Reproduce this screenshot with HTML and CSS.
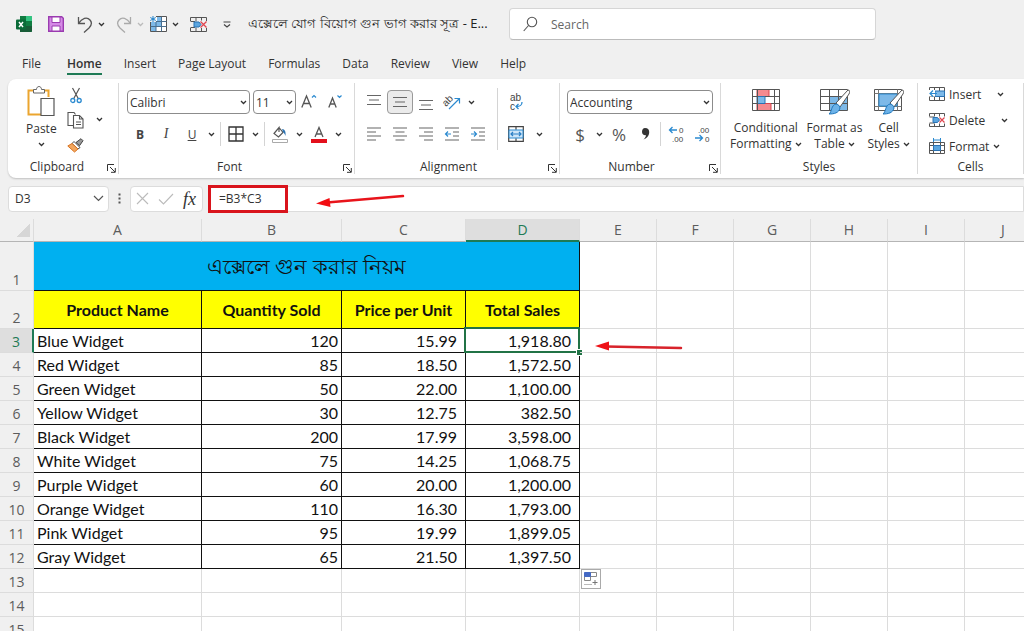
FILE: index.html
```html
<!DOCTYPE html>
<html lang="bn">
<head>
    <meta charset="UTF-8">
    <title>এক্সেলে যোগ বিয়োগ গুন ভাগ করার সূত্র - Excel</title>
    <meta name="viewport" content="width=device-width, initial-scale=1.0">
    <link rel="stylesheet" href="styles.css">
</head>
<body>
    <!-- Shared icons -->
    <svg class="sprite" aria-hidden="true">
        <symbol id="chevron" viewBox="0 0 7 5"><path d="M1 1l2.5 2.5L6 1" fill="none" stroke="currentColor" stroke-width="1.3"/></symbol>
        <symbol id="launcher" viewBox="0 0 9 9"><path d="M.5 7V.5H7M3 3l5 5M8.300 4v4.300H4" fill="none" stroke="currentColor"/></symbol>
        <symbol id="brush" viewBox="0 0 22 28"><path d="M20 1c2 0 2 2 1 4L12 18l-4-4z" fill="#fff" stroke="#555"/><path d="M8 15c2 0 4 2 4 4-1 5-6 6-11 6 3-2 2-9 7-10z" fill="#6cb2e8" stroke="#1f77bd"/></symbol>
    </svg>

    <header class="titlebar">
        <svg class="app-logo" width="16" height="16" viewBox="0 0 16 16">
            <path d="M4 0h11a1 1 0 011 1v14a1 1 0 01-1 1H4z" fill="#21a366"/>
            <path d="M4 0h6v5H4z" fill="#107c41"/><path d="M10 0h5a1 1 0 011 1v4h-6z" fill="#33c481"/>
            <path d="M4 10h12v5a1 1 0 01-1 1H4z" fill="#185c37"/><path d="M10 5h6v5h-6z" fill="#107c41"/>
            <rect y="3.500" width="10" height="10" rx="1" fill="#0b6b38"/>
            <path d="M3 6l4 5M7 6l-4 5" stroke="#fff" stroke-width="1.500"/>
        </svg>
        <button class="quick save" aria-label="Save">
            <svg width="16" height="16" viewBox="0 0 16 16"><path d="M.7.7h13l1.600 1.600v13H.7z" fill="#d58be6" stroke="#9a3bb0" stroke-width="1.400"/><path d="M4 1h8v5.500H4zM4 10h8v5H4z" fill="#fff" stroke="#9a3bb0"/></svg>
        </button>
        <button class="quick" aria-label="Undo">
            <svg width="16" height="17" viewBox="0 0 16 17"><path d="M1.500 1v6.500H8M1.500 7.500C5 2 10 .5 13 4s1 6-1 8l-5 4.500" fill="none" stroke="#555" stroke-width="1.300"/></svg>
            <svg class="chev"><use href="#chevron"/></svg>
        </button>
        <button class="quick faded" aria-label="Redo">
            <svg width="16" height="17" viewBox="0 0 16 17"><path d="M14.500 1v6.500H8M14.500 7.500C11 2 6 .5 3 4s-1 6 1 8l5 4.500" fill="none" stroke="#aaa" stroke-width="1.300"/></svg>
            <svg class="chev"><use href="#chevron"/></svg>
        </button>
        <button class="quick insert-cells" aria-label="Insert cells">
            <svg width="17" height="16" viewBox="0 0 17 16"><path d="M6 .5h10.500v15H.5V6" fill="#fff" stroke="#555"/><path d="M7 1h4.500v5H7zM1 6h10.500v4.500H1zM1 10.500h5v4.500H1z" fill="#7db9e8"/><path d="M.5 5.500h16M.5 10.500h16M6 6v9.500M11.500 .5v15" stroke="#4a6f8f"/><path d="M0 0h6v6H0z" fill="#f0f0f0"/><path d="M3 0v6M.3 1.500l5.400 3M5.700 1.500l-5.400 3" stroke="#1f82cc"/></svg>
            <svg class="chev"><use href="#chevron"/></svg>
        </button>
        <button class="quick delete-cells" aria-label="Delete cells">
            <svg width="17" height="15" viewBox="0 0 17 15"><path d="M.5 4V.5h16V4M.5 11v3.500h16V11M.5 4.500H5M.5 10.500H5M6 .5v4M11.500.5v3M6 10.500v4M11.500 11v3.500" fill="none" stroke="#555"/><path d="M4 5h5l2 2.500-2 2.500H4z" fill="#5ba6e0" stroke="#2b73b3"/><path d="M10.500 4.500l6 6M16.500 4.500l-6 6" stroke="#e0454f" stroke-width="1.300"/></svg>
        </button>
        <button class="quick" aria-label="Customize Quick Access Toolbar">
            <svg width="8" height="7" viewBox="0 0 8 7"><path d="M.5 1h7M1 3.500L4 6l3-2.500" fill="none" stroke="#444" stroke-width="1.200"/></svg>
        </button>
        <div class="doc-title">এক্সেলে যোগ বিয়োগ গুন ভাগ করার সূত্র - E...</div>
        <div class="search">
            <svg width="15" height="16" viewBox="0 0 15 16"><circle cx="9" cy="6" r="4.700" fill="none" stroke="#555" stroke-width="1.100"/><path d="M5.500 9.500L.7 15" stroke="#555" stroke-width="1.100"/></svg>
            <input type="search" placeholder="Search" aria-label="Search">
        </div>
    </header>

    <nav class="tabs">
        <a href="#file" class="file">File</a>
        <a href="#home" class="active">Home</a>
        <a href="#insert">Insert</a>
        <a href="#layout">Page Layout</a>
        <a href="#formulas">Formulas</a>
        <a href="#data">Data</a>
        <a href="#review">Review</a>
        <a href="#view">View</a>
        <a href="#help">Help</a>
    </nav>

    <div class="ribbon">
        <section class="group clipboard">
            <div class="group-body">
                <button class="big-btn">
                    <svg width="28" height="32" viewBox="0 0 28 32"><path d="M7 4.500H1.500v24H14M17 4.500h4.500V11" fill="none" stroke="#eba52f" stroke-width="2"/><path d="M6.500 7V3.500h3c0-4 5-4 5 0h3V7z" fill="#fff" stroke="#666"/><path d="M14 12.500h13v17H14z" fill="#fff" stroke="#555" stroke-width="1.200"/></svg>
                    <span>Paste</span>
                    <svg class="chev"><use href="#chevron"/></svg>
                </button>
                <div class="stack">
                    <button class="tool" aria-label="Cut"><svg width="12" height="17" viewBox="0 0 12 17"><path d="M2.500 1l6 11M9.500 1l-6 11" stroke="#555" stroke-width="1.200"/><circle cx="2.800" cy="13.500" r="2" fill="none" stroke="#2b8ad0" stroke-width="1.300"/><circle cx="9.200" cy="13.500" r="2" fill="none" stroke="#2b8ad0" stroke-width="1.300"/></svg></button>
                    <button class="tool" aria-label="Copy"><svg width="17" height="17" viewBox="0 0 17 17"><path d="M6 13.500H1V.5h6l1.500 2" fill="none" stroke="#555" stroke-width="1.100"/><path d="M6.500 3.500h6l3.500 3.500v9H6.500zM12.500 3.500V7H16M9 10h5M9 12.500h5" fill="#fff" stroke="#555" stroke-width="1.100"/></svg></button>
                    <button class="tool" aria-label="Format Painter"><svg width="17" height="15" viewBox="0 0 17 15"><path d="M9 4.500L14 .7l2 2-3.500 5z" fill="#999" stroke="#444"/><path d="M7 3.500l6 6-2 1.500-6-5.500z" fill="#fff" stroke="#444"/><path d="M5 5.500L.8 8l6.700 6 3.500-3z" fill="#f2a65e" stroke="#d9731f"/></svg></button>
                </div>
                <button class="drop" aria-label="Copy options"><svg class="chev"><use href="#chevron"/></svg></button>
            </div>
            <footer>Clipboard<button class="launcher" aria-label="Clipboard options"><svg><use href="#launcher"/></svg></button></footer>
        </section>

        <section class="group font">
            <div class="group-body rows">
                <div class="row">
                    <span class="select font-name"><select aria-label="Font"><option>Calibri</option></select><svg class="chev"><use href="#chevron"/></svg></span>
                    <span class="select font-size"><select aria-label="Font size"><option>11</option></select><svg class="chev"><use href="#chevron"/></svg></span>
                    <button class="tool" aria-label="Increase font size"><svg width="16" height="16" viewBox="0 0 16 16"><path d="M.8 13.500L5.500 2l4.700 11.500M2.500 9.500h6" fill="none" stroke="#555" stroke-width="1.300"/><path d="M11 3.500l2-2 2 2" fill="none" stroke="#2b8ad0" stroke-width="1.200"/></svg></button>
                    <button class="tool" aria-label="Decrease font size"><svg width="14" height="16" viewBox="0 0 14 16"><path d="M.8 13.500L4.500 4l3.700 9.500M2 10h5" fill="none" stroke="#555" stroke-width="1.300"/><path d="M9.500 1.500l2 2 2-2" fill="none" stroke="#2b8ad0" stroke-width="1.200"/></svg></button>
                </div>
                <div class="row">
                    <button class="tool letter"><b>B</b></button>
                    <button class="tool letter italic">I</button>
                    <button class="tool letter underline">U</button>
                    <button class="drop" aria-label="Underline options"><svg class="chev"><use href="#chevron"/></svg></button>
                    <span class="sep"></span>
                    <button class="tool" aria-label="Borders"><svg width="16" height="16" viewBox="0 0 16 16"><path d="M1 1h14v14H1zM8 1v14M1 8h14" fill="none" stroke="#333" stroke-width="1.300"/></svg></button>
                    <button class="drop" aria-label="Border options"><svg class="chev"><use href="#chevron"/></svg></button>
                    <span class="sep"></span>
                    <button class="tool" aria-label="Fill color"><svg width="16" height="17" viewBox="0 0 16 17"><path d="M7 1.500l4 5L6.500 11 2 7.500l5-6V6" fill="none" stroke="#555" stroke-width="1.200"/><path d="M10 3c3 0 4 3 3.500 7-.5-2-1.500-3-2.500-4z" fill="#2b73b3"/><path d="M.5 13.500h15v3H.5z" fill="#fff" stroke="#aaa"/></svg></button>
                    <button class="drop" aria-label="Fill options"><svg class="chev"><use href="#chevron"/></svg></button>
                    <button class="tool" aria-label="Font color"><svg width="16" height="17" viewBox="0 0 16 17"><path d="M4 11L8 1.500 12 11M5.500 8h5" fill="none" stroke="#555" stroke-width="1.300"/><path d="M0 13h16v4H0z" fill="#e3101c"/></svg></button>
                    <button class="drop" aria-label="Font color options"><svg class="chev"><use href="#chevron"/></svg></button>
                </div>
            </div>
            <footer>Font<button class="launcher" aria-label="Font options"><svg><use href="#launcher"/></svg></button></footer>
        </section>

        <section class="group alignment">
            <div class="group-body">
                <div class="rows">
                    <div class="row">
                        <button class="tool" aria-label="Top align"><svg class="lines" viewBox="0 0 16 16"><path d="M1 1.500h14M3 6h10M1 10.500h14"/></svg></button>
                        <button class="tool pressed" aria-label="Middle align"><svg class="lines" viewBox="0 0 16 16"><path d="M1 3.500h14M3 8h10M1 12.500h14"/></svg></button>
                        <button class="tool" aria-label="Bottom align"><svg class="lines" viewBox="0 0 16 16"><path d="M1 6.500h14M3 11h10M1 15.500h14"/></svg></button>
                        <button class="tool" aria-label="Orientation"><svg class="orient" width="18" height="18" viewBox="0 0 18 18"><text x="0" y="11" class="ab" transform="rotate(-45 5 9)">ab</text><path d="M6 16L16 6M11.500 5.500H16.500V10.500" fill="none" stroke="#2b8ad0" stroke-width="1.200"/></svg></button>
                        <button class="drop" aria-label="Orientation options"><svg class="chev"><use href="#chevron"/></svg></button>
                    </div>
                    <div class="row">
                        <button class="tool" aria-label="Align left"><svg class="lines" viewBox="0 0 16 16"><path d="M1 2h14M1 6h9M1 10h14M1 14h9"/></svg></button>
                        <button class="tool" aria-label="Center"><svg class="lines" viewBox="0 0 16 16"><path d="M1 2h14M3.500 6h9M1 10h14M3.500 14h9"/></svg></button>
                        <button class="tool" aria-label="Align right"><svg class="lines" viewBox="0 0 16 16"><path d="M1 2h14M6 6h9M1 10h14M6 14h9"/></svg></button>
                        <button class="tool" aria-label="Decrease indent"><svg class="lines" viewBox="0 0 16 16"><path d="M1 2h14M9 6h6M9 10h6M1 14h14"/><path d="M7 8H1.500M4 5.500L1.500 8 4 10.500" class="blue"/></svg></button>
                        <button class="tool" aria-label="Increase indent"><svg class="lines" viewBox="0 0 16 16"><path d="M1 2h14M9 6h6M9 10h6M1 14h14"/><path d="M1 8h5.500M4 5.500L6.500 8 4 10.500" class="blue"/></svg></button>
                    </div>
                </div>
                <span class="sep"></span>
                <div class="rows">
                    <div class="row">
                        <button class="tool" aria-label="Wrap text"><svg width="16" height="20" viewBox="0 0 16 20"><text x="2" y="9" class="ab">ab</text><text x="2" y="18" class="ab">c</text><path d="M14 10c0 3-1 4.500-6 4.500M10.500 12L8 14.500l2.500 2.500" fill="none" stroke="#2b8ad0" stroke-width="1.300"/></svg></button>
                    </div>
                    <div class="row">
                        <button class="tool" aria-label="Merge and center"><svg width="16" height="16" viewBox="0 0 16 16"><path d="M.7.7h14.600v14.600H.7zM8 .7v3M8 12.300v3" fill="#fff" stroke="#444" stroke-width="1.200"/><path d="M1 4h14v8H1z" fill="#cfe6f8" stroke="#2b8ad0"/><path d="M3 8h10M5 6L3 8l2 2M11 6l2 2-2 2" fill="none" stroke="#2b7fc4" stroke-width="1.200"/></svg></button>
                        <button class="drop wide" aria-label="Merge options"><svg class="chev"><use href="#chevron"/></svg></button>
                    </div>
                </div>
            </div>
            <footer>Alignment<button class="launcher" aria-label="Alignment options"><svg><use href="#launcher"/></svg></button></footer>
        </section>

        <section class="group number">
            <div class="group-body rows">
                <div class="row">
                    <span class="select number-format"><select aria-label="Number format"><option>Accounting</option></select><svg class="chev"><use href="#chevron"/></svg></span>
                </div>
                <div class="row">
                    <button class="tool symbol">$</button>
                    <button class="drop" aria-label="Currency options"><svg class="chev"><use href="#chevron"/></svg></button>
                    <button class="tool symbol">%</button>
                    <button class="tool" aria-label="Comma style"><svg width="9" height="12" viewBox="0 0 9 12"><path d="M4 0c3 0 4.500 2 4.200 4.500C8 8 5.500 10.500 2.500 11.500c1.500-1.500 2.500-3 2.500-4.300C2.500 7.500 1 6 1 3.700 1 1.500 2.300 0 4 0z" fill="#333"/></svg></button>
                    <span class="sep"></span>
                    <button class="tool" aria-label="Increase decimal"><svg width="17" height="18" viewBox="0 0 17 18"><text x="11" y="8" class="dec">0</text><text x="4" y="17" class="dec">.00</text><path d="M9 5H1.500M4.500 2L1.500 5l3 3" fill="none" stroke="#2b8ad0" stroke-width="1.300"/></svg></button>
                    <button class="tool" aria-label="Decrease decimal"><svg width="17" height="18" viewBox="0 0 17 18"><text x="4" y="8" class="dec">.00</text><text x="11" y="17" class="dec">0</text><path d="M1 13h7.500M5.500 10l3 3-3 3" fill="none" stroke="#2b8ad0" stroke-width="1.300"/></svg></button>
                </div>
            </div>
            <footer>Number<button class="launcher" aria-label="Number options"><svg><use href="#launcher"/></svg></button></footer>
        </section>

        <section class="group styles">
            <div class="group-body">
                <button class="big-btn">
                    <svg width="30" height="28" viewBox="0 0 30 28"><path d="M1.500 1.500h27v21h-27z" fill="#fff"/><path d="M6 1.500h12v7H6zM6 15.500h14v7H6z" fill="#f58a8f" stroke="#d9444c"/><path d="M6 8.500h8v7H6z" fill="#7db9e8" stroke="#2b73b3"/><path d="M1.500 1.500h27v21h-27zM1.500 8.500h4.500M14 8.500h14.500M1.500 15.500h4.500M20 15.500h8.500M6.500 1.500v21M23.500 1.500v21" fill="none" stroke="#555"/></svg>
                    <span>Conditional</span>
                    <span>Formatting <svg class="chev"><use href="#chevron"/></svg></span>
                </button>
                <button class="big-btn">
                    <svg width="31" height="28" viewBox="0 0 31 28"><path d="M1.500 1.500h27v21h-27z" fill="#fff"/><path d="M10.500 8.500h18v14h-18z" fill="#7db9e8"/><path d="M1.500 1.500h27v21h-27zM1.500 8.500h27M1.500 15.500h27M10.500 1.500v21M19.500 1.500v21" fill="none" stroke="#555"/><use href="#brush" x="9" y="1" width="22" height="28"/></svg>
                    <span>Format as</span>
                    <span>Table <svg class="chev"><use href="#chevron"/></svg></span>
                </button>
                <button class="big-btn">
                    <svg width="31" height="28" viewBox="0 0 31 28"><path d="M1.500 1.500h27v21h-27z" fill="#fff" stroke="#555"/><path d="M1.500 5.500h27M1.500 18.500h27M5.500 1.500v21M24.500 1.500v21" stroke="#777"/><path d="M6 6h18v12H6z" fill="#7db9e8" stroke="#2b8ad0"/><use href="#brush" x="9" y="1" width="22" height="28"/></svg>
                    <span>Cell</span>
                    <span>Styles <svg class="chev"><use href="#chevron"/></svg></span>
                </button>
            </div>
            <footer>Styles</footer>
        </section>

        <section class="group cells">
            <div class="group-body rows">
                <button class="line-btn"><svg width="16" height="14" viewBox="0 0 16 14"><path d="M.5.500h15v13H.5zM.5 9.500h15M5.500.5v13M10.500.5v13M10 4.500h5.500" fill="#fff" stroke="#555"/><path d="M6 4h9.500v5.500H6z" fill="#7db9e8" stroke="#2b73b3"/><path d="M0 3h6v6.500H0z" fill="#fff"/><path d="M8 6.500H1M4 3.500l-3 3 3 3" fill="none" stroke="#2b8ad0" stroke-width="1.200"/></svg><span>Insert</span><svg class="chev far"><use href="#chevron"/></svg></button>
                <button class="line-btn"><svg width="16" height="14" viewBox="0 0 16 14"><path d="M.5 3.500v-3h15v3M.5 10.500v3h15v-3M.5 4H5M.5 10H5M5.500.5v3M10.500.5v3M5.500 10.500v3M10.500 10.500v3" fill="none" stroke="#555"/><path d="M4 4.500h4.500l2 2.500-2 2.500H4z" fill="#5ba6e0" stroke="#2b73b3"/><path d="M10.500 4.500l5 5M15.500 4.500l-5 5" stroke="#e0454f" stroke-width="1.200"/></svg><span>Delete</span><svg class="chev far"><use href="#chevron"/></svg></button>
                <button class="line-btn"><svg width="16" height="16" viewBox="0 0 16 16"><path d="M.5 4.500h15v11H.5zM.5 7.500h15M.5 12.500h15M4.500 4.500v11M11.500 4.500v11" fill="#fff" stroke="#555"/><path d="M4.500 7.500h7v5h-7z" fill="#5ba6e0" stroke="#2b73b3"/><path d="M4.500 0v4M11.500 0v4M4.500 2h7" stroke="#2b8ad0"/></svg><span>Format</span><svg class="chev"><use href="#chevron"/></svg></button>
            </div>
            <footer>Cells</footer>
        </section>
    </div>

    <div class="formula-bar">
        <div class="name-box">
            <input type="text" value="D3" aria-label="Name box">
            <svg width="11" height="7" viewBox="0 0 11 7"><path d="M1 1l4.500 4.500L10 1" fill="none" stroke="#555" stroke-width="1.200"/></svg>
        </div>
        <svg class="dots" width="3" height="11" viewBox="0 0 3 11"><path d="M.5.500h2v2h-2zM.5 4.500h2v2h-2zM.5 8.500h2v2h-2z" fill="#555"/></svg>
        <div class="formula-actions">
            <button aria-label="Cancel"><svg width="13" height="13" viewBox="0 0 13 13"><path d="M1 1l11 11M12 1L1 12" stroke="#bbb" stroke-width="1.100"/></svg></button>
            <button aria-label="Enter"><svg width="16" height="12" viewBox="0 0 16 12"><path d="M1 6.500L5.500 11 15 1" fill="none" stroke="#bbb" stroke-width="1.100"/></svg></button>
            <button class="fx">fx</button>
        </div>
        <div class="formula">
            <input type="text" value="=B3*C3" aria-label="Formula">
            <span class="marker"></span>
            <svg class="arrow" width="90" height="14" viewBox="0 0 90 14"><path d="M88 2L12 8.500" stroke="#e8141b" stroke-width="2.500" stroke-linecap="round"/><path d="M1 9.500L14.500 4l1 9z" fill="#f20d12"/></svg>
        </div>
    </div>

    <main class="sheet">
        <table>
            <colgroup>
                <col class="col-head"><col class="col-a"><col class="col-b"><col class="col-c"><col class="col-d">
                <col class="col-x"><col class="col-x"><col class="col-x"><col class="col-x"><col class="col-x"><col class="col-x">
            </colgroup>
            <thead>
                <tr><th class="corner"></th><th>A</th><th>B</th><th>C</th><th class="current">D</th><th>E</th><th>F</th><th>G</th><th>H</th><th>I</th><th>J</th></tr>
            </thead>
            <tbody>
                <tr class="title-row"><th>1</th><td class="title" colspan="4">এক্সেলে গুন করার নিয়ম</td><td></td><td></td><td></td><td></td><td></td><td></td></tr>
                <tr class="label-row"><th>2</th><td class="label">Product Name</td><td class="label">Quantity Sold</td><td class="label">Price per Unit</td><td class="label">Total Sales</td><td></td><td></td><td></td><td></td><td></td><td></td></tr>
                <tr class="data"><th class="current">3</th><td>Blue Widget</td><td>120</td><td>15.99</td><td class="selected">1,918.80</td><td class="anchor"><svg class="arrow" width="90" height="12" viewBox="0 0 90 12"><path d="M87 8L12 6.500" stroke="#d8232b" stroke-width="2.500" stroke-linecap="round"/><path d="M1 6L15 1.500v9z" fill="#ee1218"/></svg></td><td></td><td></td><td></td><td></td><td></td></tr>
                <tr class="data"><th>4</th><td>Red Widget</td><td>85</td><td>18.50</td><td>1,572.50</td><td></td><td></td><td></td><td></td><td></td><td></td></tr>
                <tr class="data"><th>5</th><td>Green Widget</td><td>50</td><td>22.00</td><td>1,100.00</td><td></td><td></td><td></td><td></td><td></td><td></td></tr>
                <tr class="data"><th>6</th><td>Yellow Widget</td><td>30</td><td>12.75</td><td>382.50</td><td></td><td></td><td></td><td></td><td></td><td></td></tr>
                <tr class="data"><th>7</th><td>Black Widget</td><td>200</td><td>17.99</td><td>3,598.00</td><td></td><td></td><td></td><td></td><td></td><td></td></tr>
                <tr class="data"><th>8</th><td>White Widget</td><td>75</td><td>14.25</td><td>1,068.75</td><td></td><td></td><td></td><td></td><td></td><td></td></tr>
                <tr class="data"><th>9</th><td>Purple Widget</td><td>60</td><td>20.00</td><td>1,200.00</td><td></td><td></td><td></td><td></td><td></td><td></td></tr>
                <tr class="data"><th>10</th><td>Orange Widget</td><td>110</td><td>16.30</td><td>1,793.00</td><td></td><td></td><td></td><td></td><td></td><td></td></tr>
                <tr class="data"><th>11</th><td>Pink Widget</td><td>95</td><td>19.99</td><td>1,899.05</td><td></td><td></td><td></td><td></td><td></td><td></td></tr>
                <tr class="data"><th>12</th><td>Gray Widget</td><td>65</td><td>21.50</td><td>1,397.50</td><td></td><td></td><td></td><td></td><td></td><td></td></tr>
                <tr><th>13</th><td></td><td></td><td></td><td></td><td class="anchor"><button class="fill-options" aria-label="Auto fill options"><svg width="14" height="14" viewBox="0 0 14 14"><path d="M6.500.500h6v4h-6zM.5 4.500h6v4h-6z" fill="#fff" stroke="#888"/><path d="M.5.500h6v4h-6z" fill="#4469c4" stroke="#4469c4"/><path d="M.5 12.500h7" stroke="#777" stroke-dasharray="1 1"/><path d="M8.500 10.500h5M11 8v5" stroke="#777"/></svg></button></td><td></td><td></td><td></td><td></td><td></td></tr>
                <tr><th>14</th><td></td><td></td><td></td><td></td><td></td><td></td><td></td><td></td><td></td><td></td></tr>
                <tr><th>15</th><td></td><td></td><td></td><td></td><td></td><td></td><td></td><td></td><td></td><td></td></tr>
            </tbody>
        </table>
    </main>
</body>
</html>
```
FILE: styles.css
```css
* {
    box-sizing: border-box;
}
body {
    margin: 0;
    height: 100vh;
    overflow: hidden;
    display: flex;
    flex-direction: column;
    background-color: #f0f0f0;
    color: #333;
    font-family: "Open Sans", "Noto Sans", sans-serif;
    font-size: 12px;
}
button, input, select {
    font: inherit;
    color: inherit;
    border: none;
    background: none;
    padding: 0;
    margin: 0;
}
svg {
    display: block;
    flex: none;
}
.sprite {
    position: absolute;
    width: 0;
    height: 0;
}
.chev {
    width: 7px;
    height: 5px;
}

/* Title bar */
.titlebar {
    display: flex;
    align-items: center;
    height: 48px;
    padding-left: 16px;
}
.quick {
    display: flex;
    align-items: center;
    gap: 5px;
    margin-left: 11px;
}
.save {
    margin: 0 2px 0 16px;
}
.faded {
    color: #bbb;
}
.insert-cells {
    margin-left: 6px;
}
.delete-cells {
    margin-right: 5px;
}
.doc-title {
    width: 236px;
    margin: 0 25px 0 17px;
    color: #222;
    font-size: 13px;
    white-space: nowrap;
}
.search {
    display: flex;
    align-items: center;
    gap: 13px;
    width: 367px;
    height: 32px;
    padding-left: 13px;
    background-color: #fff;
    border: 1px solid #d6d6d6;
    border-bottom-color: #bbb;
    border-radius: 4px;
}
.search input {
    flex: 1;
    font-size: 12px;
    outline: none;
}
.search input::placeholder {
    color: #666;
    opacity: 1;
}

/* Ribbon tabs */
.tabs {
    display: flex;
    gap: 22px;
    height: 31px;
    padding: 5px 0 0 22px;
}
.tabs a {
    height: 22px;
    line-height: 21px;
    color: #333;
    text-decoration: none;
}
.tabs .file {
    margin-right: 4px;
}
.tabs .active {
    font-weight: 600;
    border-bottom: 2px solid #1e7a55;
}

/* Ribbon */
.ribbon {
    display: flex;
    flex: none;
    height: 99px;
    margin-left: 8px;
    padding: 4px 0;
    background-color: #fff;
    border-radius: 8px 0 0 8px;
    box-shadow: 0 1px 2px rgba(0, 0, 0, 0.2);
}
.group {
    display: flex;
    flex: none;
    flex-direction: column;
    border-right: 1px solid #d9d9d9;
}
.group-body {
    display: flex;
    flex: 1;
    min-height: 0;
}
.group footer {
    position: relative;
    line-height: 14px;
    text-align: center;
}
.launcher {
    position: absolute;
    right: 2px;
    top: 4px;
}
.launcher svg {
    width: 9px;
    height: 9px;
}
.clipboard {
    width: 111px;
}
.clipboard footer {
    padding-right: 12px;
}
.font {
    width: 236px;
}
.font footer {
    padding-right: 14px;
}
.alignment {
    width: 205px;
}
.alignment footer,
.number footer {
    padding-right: 17px;
}
.number {
    width: 161px;
}
.styles {
    width: 197px;
}
.cells {
    width: 106px;
}
.rows {
    display: flex;
    flex-direction: column;
    gap: 8px;
    padding-top: 7px;
}
.row {
    display: flex;
    align-items: center;
    height: 24px;
}
.font .row {
    padding-left: 8px;
}
.alignment .group-body {
    padding-left: 6px;
}
.number .row {
    padding-left: 7px;
}
.tool {
    display: flex;
    align-items: center;
    justify-content: center;
    width: 26px;
    height: 24px;
}
.pressed {
    background-color: #ebebeb;
    border: 1px solid #999;
    border-radius: 4px;
}
.drop {
    display: flex;
    align-items: center;
    justify-content: center;
    width: 13px;
    height: 24px;
}
.wide {
    width: 20px;
}
.sep {
    width: 1px;
    height: 24px;
    margin: 0 2px;
    background-color: #d4d4d4;
}
.alignment .sep {
    height: 62px;
    margin: 5px 5px 0 6px;
}
.select {
    position: relative;
    height: 24px;
}
.select select {
    width: 100%;
    height: 100%;
    padding-left: 2px;
    background-color: #fff;
    border: 1px solid #8c8c8c;
    border-radius: 4px;
    appearance: none;
}
.select .chev {
    position: absolute;
    right: 3px;
    top: 10px;
    pointer-events: none;
}
.font-name {
    width: 123px;
    margin-right: 3px;
}
.font-size {
    width: 43px;
}
.number-format {
    width: 146px;
}
.letter {
    font-size: 12px;
    color: #444;
}
.italic {
    font-family: "Liberation Serif", serif;
    font-size: 14px;
    font-style: italic;
}
.underline {
    text-decoration: underline;
}
.symbol {
    font-size: 17px;
    color: #555;
}
.lines {
    width: 16px;
    height: 16px;
    fill: none;
    stroke: #666;
    stroke-width: 1.2;
}
.lines .blue {
    stroke: #2b8ad0;
}
.orient {
    overflow: visible;
}
.ab {
    font-family: "Liberation Sans", sans-serif;
    font-size: 10px;
    line-height: 9px;
    fill: #444;
}
.wrap .ab {
    font-size: 9px;
}
.dec {
    font-family: "Liberation Sans", sans-serif;
    font-size: 8px;
    fill: #444;
}
.big-btn {
    display: flex;
    flex-direction: column;
    align-items: center;
    line-height: 16px;
    white-space: nowrap;
}
.big-btn span {
    display: flex;
    align-items: center;
    gap: 3px;
}
.clipboard .group-body {
    padding-left: 18px;
}
.clipboard .big-btn {
    padding-top: 3px;
}
.clipboard .big-btn svg + span {
    margin: 3px 0 5px;
}
.stack {
    display: flex;
    flex-direction: column;
    gap: 1px;
    margin-left: 6px;
}
.clipboard .drop {
    margin: 24px 0 0 4px;
}
.styles .group-body {
    gap: 5px;
    padding: 5px 0 0 9px;
}
.styles .big-btn > svg {
    margin-bottom: 4px;
}
.cells .group-body {
    gap: 4px;
    padding: 0 0 0 11px;
}
.line-btn {
    display: flex;
    align-items: center;
    gap: 4px;
    height: 22px;
}
.far {
    margin-left: 12px;
}

/* Formula bar */
.formula-bar {
    display: flex;
    align-items: center;
    height: 41px;
    padding-left: 8px;
}
.name-box,
.formula-actions,
.formula {
    display: flex;
    align-items: center;
    height: 26px;
    background-color: #fff;
    border: 1px solid #dcdcdc;
    border-radius: 4px;
}
.name-box {
    width: 101px;
    padding: 0 4px 0 6px;
}
.name-box input {
    flex: 1;
    min-width: 0;
}
.dots {
    margin: 0 9px;
}
.formula-actions {
    gap: 9px;
    width: 73px;
    padding-left: 5px;
}
.fx {
    font-family: "Liberation Serif", serif;
    font-size: 18px;
    font-style: italic;
    line-height: 20px;
}
.formula {
    position: relative;
    flex: 1;
    margin-left: 5px;
    border-radius: 4px 0 0 4px;
}
.formula input {
    flex: 1;
    padding-left: 10px;
}
.marker {
    position: absolute;
    left: -1px;
    top: -2px;
    width: 80px;
    height: 28px;
    border: 3px solid #d9141c;
    pointer-events: none;
}
.formula .arrow {
    position: absolute;
    left: 106px;
    top: 7px;
}

/* Sheet */
.sheet {
    flex: 1;
    min-height: 0;
    overflow: hidden;
    background-color: #fff;
}
table {
    width: 1041px;
    table-layout: fixed;
    border-collapse: separate;
    border-spacing: 0;
    font-family: Lato, "Noto Sans", sans-serif;
    font-size: 16px;
    line-height: 20px;
    color: #111;
}
.col-head {
    width: 34px;
}
.col-a {
    width: 168px;
}
.col-b {
    width: 140px;
}
.col-c {
    width: 124px;
}
.col-d {
    width: 114px;
}
.col-x {
    width: 77px;
}
th, td {
    height: 24px;
    padding: 0 3px;
    border-right: 1px solid #dcdcdc;
    border-bottom: 1px solid #dcdcdc;
    white-space: nowrap;
}
th {
    padding: 0;
    background-color: #f0f0f0;
    color: #5c5c5c;
    font-family: "Open Sans", "Noto Sans", sans-serif;
    font-size: 14px;
    font-weight: normal;
}
thead th {
    height: 23px;
    border-bottom-color: #b5b5b5;
}
tbody th {
    vertical-align: bottom;
}
.corner {
    background-image: linear-gradient(135deg, transparent 50%, #d6d6d6 50%);
    background-size: 14px 14px;
    background-position: 16px 4px;
    background-repeat: no-repeat;
}
thead .current {
    background-color: #dedede;
    color: #1e7a55;
    border-bottom: 2px solid #1e7a55;
}
tbody .current {
    background-color: #dedede;
    color: #1e7a55;
    border-right: 2px solid #1e7a55;
}
.title-row td {
    height: 49px;
}
.label-row td {
    height: 38px;
}
.title,
.label,
.data td:nth-child(-n+5) {
    border-color: #111;
}
.title {
    background-color: #00b0f0;
    font-size: 21px;
    line-height: 28px;
    text-align: center;
}
.label {
    background-color: #ff0;
    font-weight: bold;
    text-align: center;
}
.data td {
    text-align: right;
}
.data td:nth-child(2) {
    text-align: left;
}
.data td:nth-child(4),
.data td:nth-child(5) {
    padding-right: 8px;
}
.selected {
    position: relative;
}
.selected::before {
    content: "";
    position: absolute;
    inset: -2px -1px -1px -2px;
    border: 2px solid #217346;
}
.selected::after {
    content: "";
    position: absolute;
    right: -3px;
    bottom: -3px;
    width: 5px;
    height: 5px;
    background-color: #217346;
    outline: 1px solid #fff;
}
.anchor {
    position: relative;
}
.anchor .arrow {
    position: absolute;
    left: 14px;
    top: 11px;
    z-index: 1;
}
.fill-options {
    position: absolute;
    left: 1px;
    top: 0;
    display: flex;
    align-items: center;
    justify-content: center;
    width: 20px;
    height: 20px;
    background-color: #fff;
    border: 1px solid #aaa;
}
```
